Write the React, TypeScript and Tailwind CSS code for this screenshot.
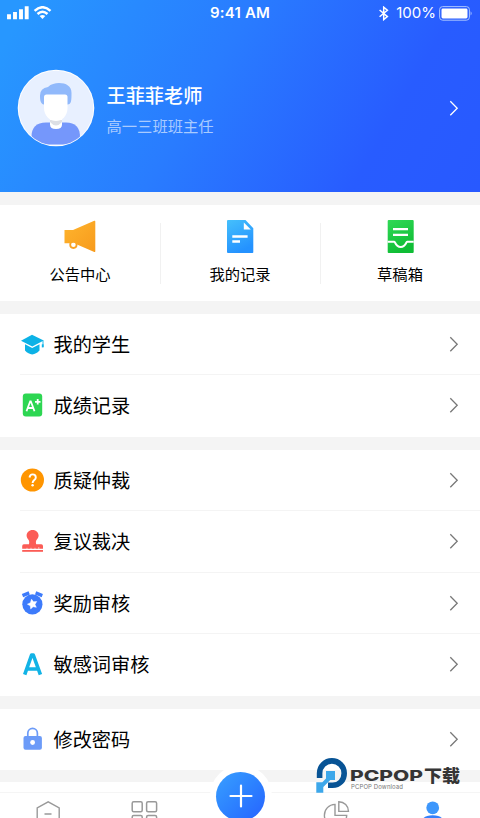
import type { ReactNode } from "react"

type Row = { label: string; icon: ReactNode }

const MegaphoneIcon = () => (
  <svg width="34" height="34" viewBox="0 0 34 34">
    <defs>
      <linearGradient id="horn" x1="0" y1="0" x2="1" y2="1">
        <stop offset="0" stopColor="#ffb52e" />
        <stop offset="1" stopColor="#f79a1c" />
      </linearGradient>
    </defs>
    <circle cx="10.4" cy="24.8" r="3.2" fill="#fff" stroke="#f9a225" strokeWidth="1.8" />
    <path d="M1.5 10H10L31.3 .8Q32.3 .5 32.3 1.5V31.3Q32.3 32.3 31.3 31.9L14 24.4Q13 22.6 10.4 22.6T7 23.2H1.5Z" fill="url(#horn)" />
  </svg>
)

const RecordIcon = () => (
  <svg width="34" height="34" viewBox="0 0 34 34">
    <defs>
      <linearGradient id="doc" x1="0" y1="0" x2="0.4" y2="1">
        <stop offset="0" stopColor="#45c0fc" />
        <stop offset="1" stopColor="#2492ff" />
      </linearGradient>
    </defs>
    <path d="M5 0H22.5L30.3 8.3V31.8A1 1 0 0 1 29.3 33H5A1 1 0 0 1 4 32V1A1 1 0 0 1 5 0Z" fill="url(#doc)" />
    <path d="M20.8 2.6V9.6H27.8Z" fill="#fff" />
    <path d="M9.3 16.4H24.6M9.3 21.6H17" stroke="#fff" strokeWidth="2.5" />
  </svg>
)

const DraftIcon = () => (
  <svg width="34" height="34" viewBox="0 0 34 34">
    <defs>
      <linearGradient id="draft" x1="0" y1="0" x2="0.4" y2="1">
        <stop offset="0" stopColor="#31d957" />
        <stop offset="1" stopColor="#0fbd35" />
      </linearGradient>
    </defs>
    <rect x="4.7" width="26" height="33" rx="1" fill="url(#draft)" />
    <path d="M10 9.2H25M10 14.8H25" stroke="#fff" strokeWidth="2.3" />
    <path d="M4.7 21.7H11.3C12.4 21.7 12.4 27 17.7 27S23 21.7 24.1 21.7H30.7" fill="none" stroke="#fff" strokeWidth="2.1" />
  </svg>
)

const CapIcon = () => (
  <svg width="24" height="24" viewBox="0 0 24 24">
    <path d="M1 8.7L12 2.8L23.7 8.5L12.3 14.6Z" fill="#0cb2e6" />
    <path d="M5 12.2L12.2 16L19.5 12.2V18.6Q16 22.4 12.2 22.4T5 18.6Z" fill="#0cb2e6" />
    <path d="M23 8.5V15" stroke="#0cb2e6" strokeWidth=".9" />
    <path d="M22.7 12.3V15.4" stroke="#0cb2e6" strokeWidth="1.8" />
  </svg>
)

const GradeIcon = () => (
  <svg width="24" height="24" viewBox="0 0 24 24">
    <rect x="2.8" y=".5" width="19.4" height="23" rx="3" fill="#2dd652" />
    <path d="M6.5 18.2L10.2 8.3H10.8L14.5 18.2M7.8 15H13.2M17.7 6.1V11.5M15 8.8H20.5" fill="none" stroke="#fff" strokeWidth="1.8" />
  </svg>
)

const QuestionIcon = () => (
  <svg width="24" height="24" viewBox="0 0 24 24">
    <circle cx="12.4" cy="12" r="11.6" fill="#ff9500" />
    <path d="M9.5 9.5C9.8 7.6 10.8 6.4 12.6 6.4C14.5 6.4 15.8 7.7 15.8 9.4C15.8 12 12.6 12 12.6 15" fill="none" stroke="#fff" strokeWidth="1.9" />
    <circle cx="12.6" cy="17.3" r="1.2" fill="#fff" />
  </svg>
)

const StampIcon = () => (
  <svg width="24" height="24" viewBox="0 0 24 24">
    <path d="M12.6 1C9 1 6.6 3.5 6.6 6.6C6.6 10.5 10.3 10.5 9 15.2H3.9Q2.2 15.2 2.2 17V19.7H23V17Q23 15.2 21.3 15.2H16.2C14.9 10.5 18.6 10.5 18.6 6.6C18.6 3.5 16.2 1 12.6 1Z" fill="#fb5c56" />
    <path d="M7 19.8V18.8M11 19.8V18.8M15 19.8V18.8M18.8 19.8V18.2" stroke="#fff" strokeWidth=".7" />
    <path d="M2.2 21.9H23" stroke="#fb5c56" strokeWidth="1.8" />
  </svg>
)

const RewardIcon = () => (
  <svg width="24" height="24" viewBox="0 0 24 24">
    <circle cx="12.4" cy="13.3" r="10.1" fill="#3d7bfb" />
    <path d="M2.5 4.6L9.2 1.9M15.6 1.9L22.3 4.6" stroke="#3d7bfb" strokeWidth="3.4" />
    <path d="M11.5 8.2L13.5 10.8L16.7 10.5L15 13.4L16.3 16.3L13.1 15.7L10.7 17.9L10.3 14.8L7.4 13.2L10.4 11.8Z" fill="#fff" stroke="#fff" strokeWidth=".5" strokeLinejoin="round" />
  </svg>
)

const LetterIcon = () => (
  <svg width="24" height="24" viewBox="0 0 24 24">
    <path d="M4.7 22.6L11.6 3H13.3L20.4 22.6M7.4 17H17.6" fill="none" stroke="#12b3e6" strokeWidth="3.6" strokeLinejoin="round" />
  </svg>
)

const LockIcon = () => (
  <svg width="24" height="24" viewBox="0 0 24 24">
    <path d="M7.8 11V6.2A4.8 4.8 0 0 1 17.4 6.2V11" fill="none" stroke="#6c9bf8" strokeWidth="1.7" />
    <rect x="3.5" y="9.1" width="18.4" height="13.6" rx="2" fill="#6c9bf8" />
    <circle cx="12.6" cy="15.5" r="2.4" fill="#fff" />
  </svg>
)

const shortcuts: Row[] = [
  { label: "公告中心", icon: <MegaphoneIcon /> },
  { label: "我的记录", icon: <RecordIcon /> },
  { label: "草稿箱", icon: <DraftIcon /> },
]

const groups: Row[][] = [
  [
    { label: "我的学生", icon: <CapIcon /> },
    { label: "成绩记录", icon: <GradeIcon /> },
  ],
  [
    { label: "质疑仲裁", icon: <QuestionIcon /> },
    { label: "复议裁决", icon: <StampIcon /> },
    { label: "奖励审核", icon: <RewardIcon /> },
    { label: "敏感词审核", icon: <LetterIcon /> },
  ],
  [{ label: "修改密码", icon: <LockIcon /> }],
]

function Chevron({ className }: { className: string }) {
  return (
    <svg width="10" height="16" viewBox="0 0 10 16" fill="none" className={className}>
      <path d="M1.3 1.2L8.2 8.2L1.3 15.2" stroke="currentColor" strokeWidth="1.3" />
    </svg>
  )
}

function StatusBar() {
  return (
    <div className="grid h-[25px] grid-cols-3 items-center px-[7px] pt-px font-['Inter','Liberation_Sans',sans-serif] text-[15px] text-white">
      <svg width="46" height="14" viewBox="0 0 46 14" fill="none">
        <path d="M2 8.2V13.3M8 6V13.3M14 3.2V13.3M19.7 .3V13.3" stroke="#fff" strokeWidth="3.9" />
        <path d="M27.6 4.9Q35.5 -2.4 43.5 4.9M30.5 8Q35.5 3.4 40.5 8" stroke="#fff" strokeWidth="2.5" />
        <path d="M32.6 10Q35.5 7.8 38.3 10L35.5 13Z" fill="#fff" />
      </svg>
      <span className="whitespace-nowrap text-center font-semibold tracking-[0.2px]">9:41 AM</span>
      <div className="flex items-center justify-end">
        <svg width="11" height="15" viewBox="0 0 11 15" fill="none" className="mr-[7px]">
          <path d="M1.6 4L9.4 10.6L5.7 13.6V1.2L9.4 4.2L1.6 10.8" stroke="#fff" strokeWidth="1.5" />
        </svg>
        <span className="mr-[3px]">100%</span>
        <svg width="34" height="15" viewBox="0 0 34 15" fill="none">
          <rect x=".6" y=".6" width="29.8" height="13.6" rx="3" stroke="#a9c4ff" />
          <rect x="2.5" y="2.5" width="26" height="10" rx="1.4" fill="#fff" />
          <path d="M31.6 5.2Q33.6 7.4 31.6 9.6Z" fill="#a9c4ff" />
        </svg>
      </div>
    </div>
  )
}

function Avatar() {
  return (
    <svg width="78" height="78" viewBox="0 0 78 78" className="shrink-0">
      <defs>
        <clipPath id="face">
          <circle cx="39" cy="39" r="37.5" />
        </clipPath>
      </defs>
      <circle cx="39" cy="39" r="38.3" fill="#fff" />
      <circle cx="39" cy="39" r="37.3" fill="#e8f0ff" />
      <g clipPath="url(#face)">
        <path d="M14.5 75V68Q14.5 53.5 29 53.5H49Q63 53.5 63 68V75.5H14.5Z" fill="#7597fb" />
        <path d="M33 48H45V55.5Q45 60 39 60T33 55.5Z" fill="#fff" />
        <path d="M33 51H45V53Q42 56.5 39 56.5T33 53Z" fill="#dddfe5" />
      </g>
      <path d="M27 35.5C23.5 35 23 31 23 26.5Q23 19 31 18C34 15 38 14 42 14C49 14 54.5 17 54.5 24C54.5 31 54.5 35.5 50.5 35.5Z" fill="#91b9fb" />
      <path d="M27 28Q27 25.5 29.5 25.5H48Q50.5 25.5 50.5 28V39C50.5 47.5 44.5 52 39 52S27 47.5 27 39Z" fill="#fff" />
    </svg>
  )
}

function TabBar() {
  return (
    <nav className="relative mt-[9px] grid h-[27px] grid-cols-5 justify-items-center border-y border-t-[#f5f5f5] border-b-[#dedede] bg-white">
      <svg width="28" height="25" viewBox="0 0 28 25" fill="none" stroke="#999" strokeWidth="1.4">
        <path d="M3.2 26V14.8L14.2 8.8L25.2 14.8V26M10.5 21H17.5" />
      </svg>
      <svg width="28" height="25" viewBox="0 0 28 25" fill="none" stroke="#999" strokeWidth="1.5">
        <rect x="2.2" y="8.8" width="10" height="10" rx="1.5" />
        <rect x="16.6" y="8.8" width="10" height="10" rx="1.5" />
        <rect x="2.2" y="22.6" width="10" height="10" rx="1.5" />
        <rect x="16.6" y="22.6" width="10" height="10" rx="1.5" />
      </svg>
      {/* raised add button, cropped by the bottom edge */}
      <div className="absolute -top-[28px] left-[209.5px] h-[53px] w-[62px] overflow-hidden">
        <div className="flex size-[62px] items-center justify-center rounded-full bg-white">
          <div className="flex size-[49px] items-center justify-center rounded-full bg-linear-to-br from-[#3a9fff] to-[#2861ff]">
            <svg width="24" height="24" viewBox="0 0 24 24" stroke="#fff" strokeWidth="2.2" strokeLinecap="round">
              <path d="M1.5 12H22.5M12 1.5V22.5" />
            </svg>
          </div>
        </div>
      </div>
      <svg width="28" height="25" viewBox="0 0 28 25" fill="none" stroke="#999" strokeWidth="1.4" className="col-start-4">
        <path d="M13 11.4V22.4H24.7C24.3 29 20 34 13.7 34C7.2 34 2.4 28.5 2.4 22.2C2.4 16.2 6.9 11.6 13 11.4Z" />
        <path d="M16.8 8.8V18.4H26.5C26.5 13.1 22.3 8.8 16.8 8.8Z" />
      </svg>
      <svg width="28" height="25" viewBox="0 0 28 25" fill="none">
        <circle cx="14.7" cy="14.8" r="6.4" fill="#3d97fc" />
        <path d="M3.9 28Q5.4 22.3 14.7 22.3T25.5 28Z" fill="#3580fb" />
      </svg>
    </nav>
  )
}

function Watermark() {
  return (
    <svg width="148" height="38" viewBox="0 0 148 38" className="absolute left-[315px] top-[757px]">
      <path d="M4.6 21V16.2A12.3 12.3 0 0 1 29.2 16.2C29.2 23.2 24.5 28.2 17.5 28.2H13" fill="none" stroke="#075395" strokeWidth="5.6" />
      <path d="M11 14H20V23H15.3L8.3 30V35.7H1.3V25.3H7.3L11 21.6Z" fill="#3ca7ea" />
      <text x="35" y="23.8" textLength="73" lengthAdjust="spacingAndGlyphs" fill="#353535" className="font-['Inter','Liberation_Sans',sans-serif] text-[15px] font-extrabold">
        PCPOP
      </text>
      <text x="109" y="24.7" textLength="36" lengthAdjust="spacingAndGlyphs" fill="#353535" className="font-['Noto_Sans_CJK_SC',sans-serif] text-[17px] font-black">
        下载
      </text>
      <text x="36" y="32.3" textLength="52" fill="#777" className="font-['Inter','Liberation_Sans',sans-serif] text-[6px]">
        PCPOP Download
      </text>
    </svg>
  )
}

export default function App() {
  return (
    <div className="relative h-[818px] w-[480px] overflow-hidden bg-[#f4f4f4] font-['Noto_Sans_CJK_SC',sans-serif] text-black">
      <header className="h-[191.5px] bg-[linear-gradient(120deg,#2797ff_5%,#297cff_43%,#285cff_78%,#2859ff_100%)]">
        <StatusBar />
        <div className="flex items-center pl-[17px] pr-[21px] pt-[44px]">
          <Avatar />
          <div className="ml-[11.5px] flex-1 pt-px text-white">
            <h1 className="text-[19.2px] font-medium leading-7">王菲菲老师</h1>
            <p className="mt-1 text-[15.3px] leading-6 text-[#a9cbff]">高一三班班主任</p>
          </div>
          <Chevron className="text-white" />
        </div>
      </header>

      <section className="mt-[13px] grid h-[96px] grid-cols-3 bg-white">
        {shortcuts.map(({ label, icon }) => (
          <div key={label} className="group relative flex flex-col items-center pt-[15.5px]">
            {icon}
            <span className="mt-[6.5px] text-[15.3px] leading-6">{label}</span>
            <i className="absolute -right-px top-[18px] h-[61px] w-px bg-[#f1f1f1] group-last:hidden" />
          </div>
        ))}
      </section>

      {groups.map((rows) => (
        <section key={rows[0].label} className="mt-[13px] bg-white">
          {rows.map(({ label, icon }) => (
            <div key={label} className="group flex h-[61.5px] items-center pl-5">
              <div className="flex h-full flex-1 items-center border-b border-[#f4f4f4] pr-[21px] group-last:border-transparent">
                {icon}
                <span className="ml-[9.5px] flex-1 text-[19.2px] leading-7">{label}</span>
                <Chevron className="text-[#777]" />
              </div>
            </div>
          ))}
        </section>
      ))}

      <footer className="mt-[12px] bg-white pt-px">
        <TabBar />
      </footer>
      <Watermark />
    </div>
  )
}
